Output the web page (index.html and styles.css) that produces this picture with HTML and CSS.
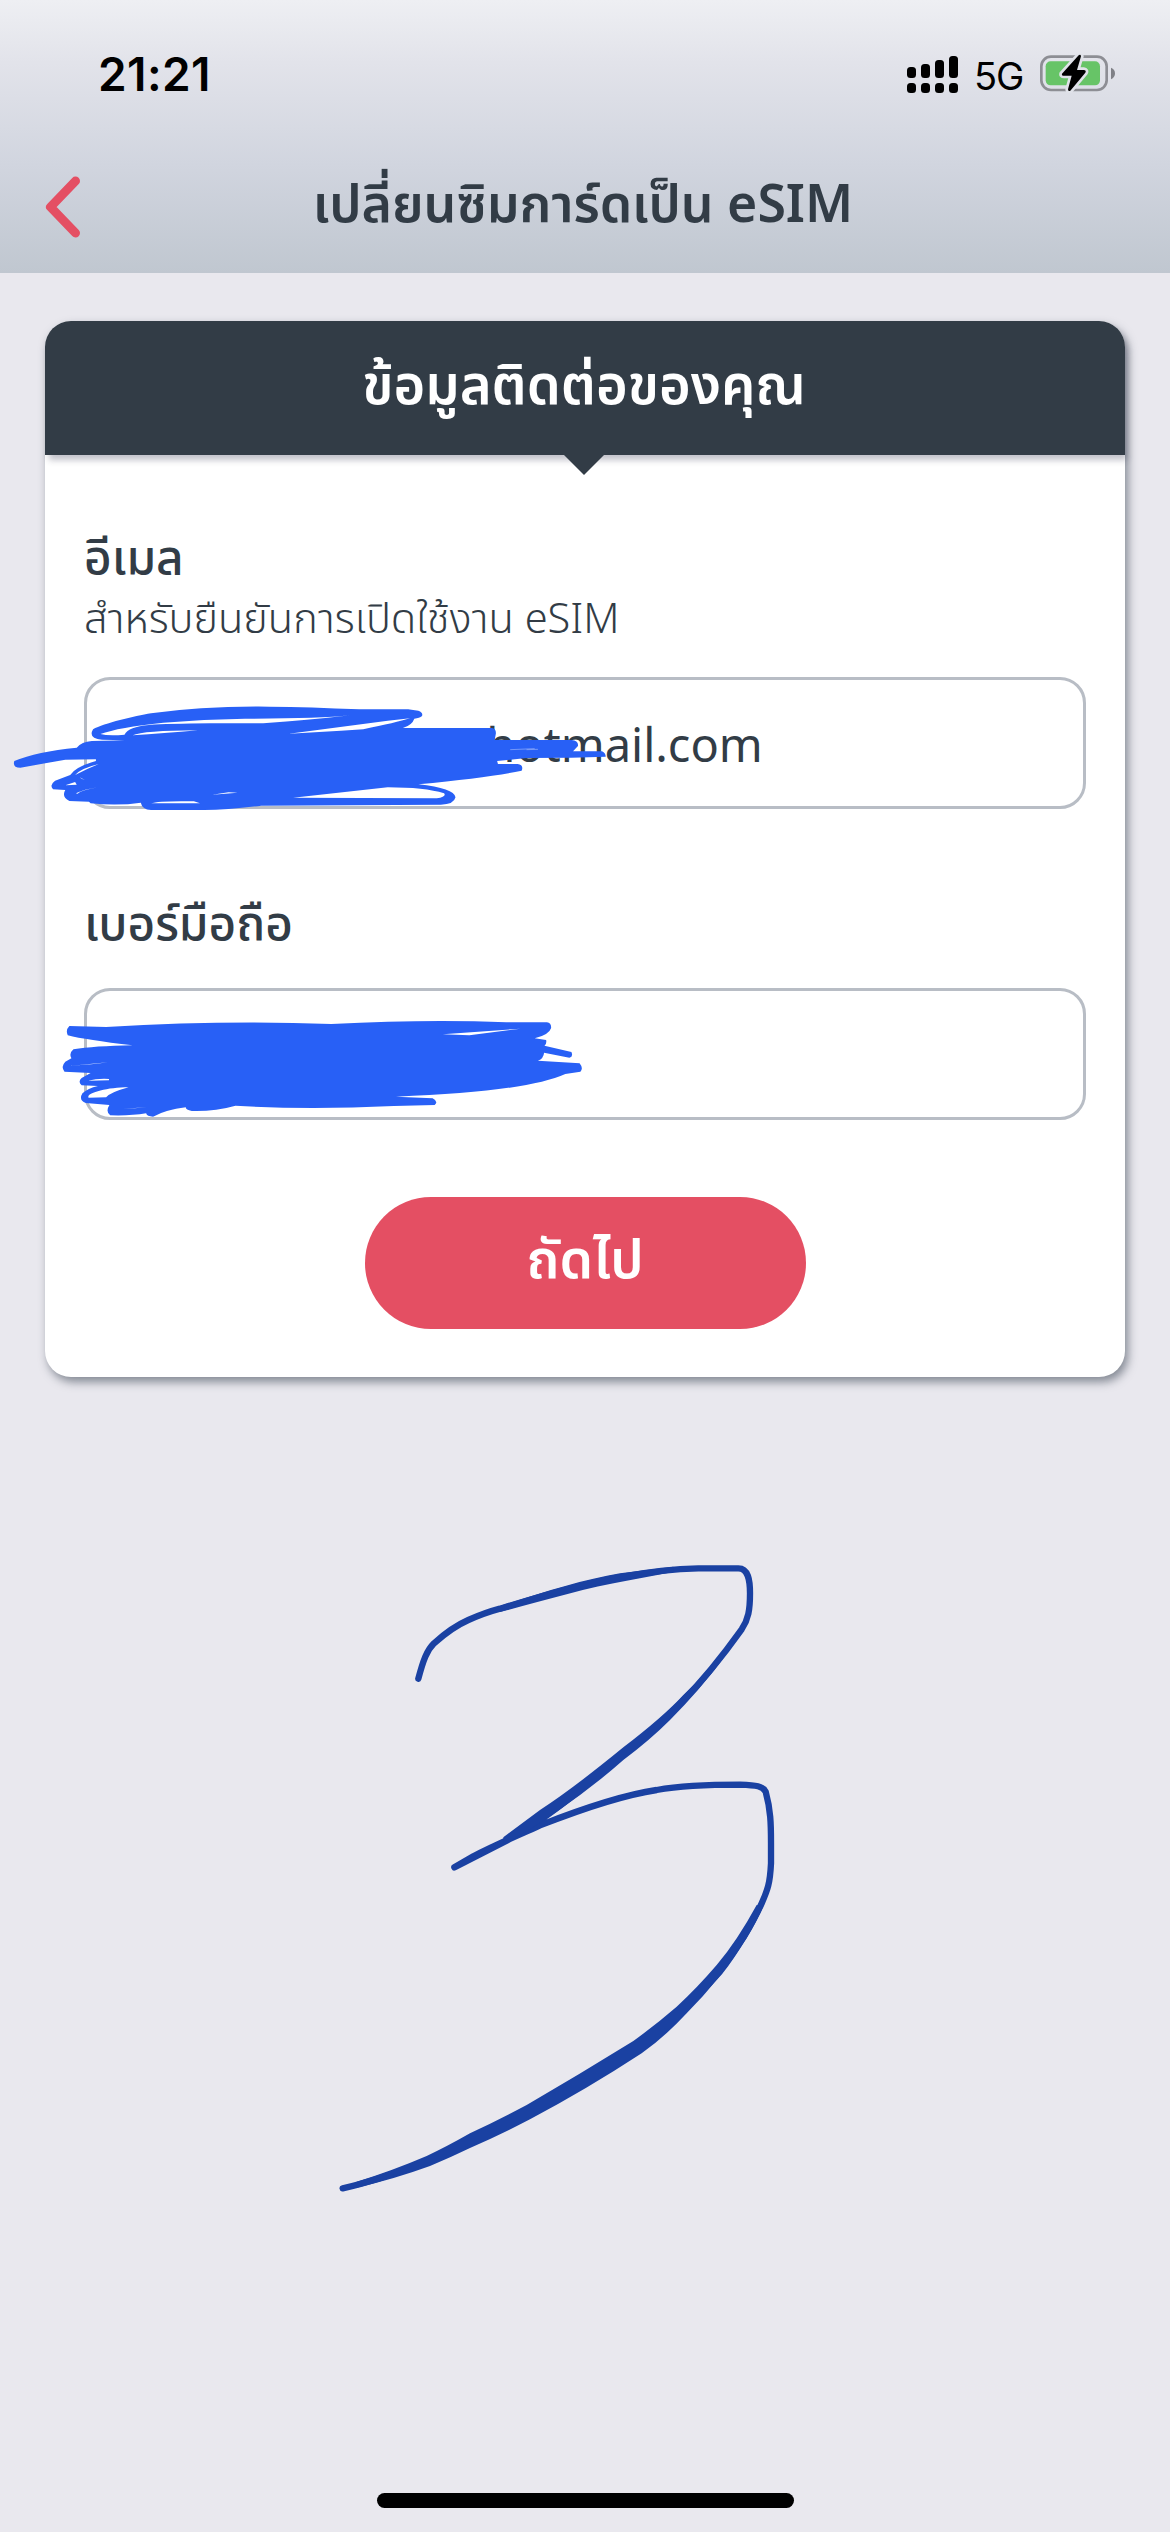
FILE: index.html
```html
<!DOCTYPE html>
<html lang="th">
<head>
<meta charset="utf-8">
<title>เปลี่ยนซิมการ์ดเป็น eSIM</title>
<link rel="stylesheet" href="styles.css">
</head>
<body>
<header class="header">
  <div class="status">
    <span class="time">21:21</span>
    <div class="status-icons">
      <svg class="signal" viewBox="0 0 52 38" width="52" height="38">
        <rect x="0" y="11" width="9" height="11" rx="3.5"/><rect x="14" y="8" width="9" height="14" rx="3.5"/><rect x="28" y="4" width="9" height="18" rx="3.5"/><rect x="42" y="0" width="9" height="22" rx="3.5"/>
        <rect x="0" y="27" width="9" height="10" rx="3.5"/><rect x="14" y="27" width="9" height="10" rx="3.5"/><rect x="28" y="27" width="9" height="10" rx="3.5"/><rect x="42" y="27" width="9" height="10" rx="3.5"/>
      </svg>
      <span class="network">5G</span>
      <svg class="battery" viewBox="480 74 228 116" width="76" height="38.7">
        <rect x="484" y="82" width="196" height="100" rx="29" fill="none" stroke="#8d8e94" stroke-width="8"/>
        <path d="M693 115Q705 120 705 132T693 150Z" fill="#7f8086"/>
        <rect x="497" y="96" width="163" height="72" rx="15" fill="#67c467"/>
        <path d="M596 78L546 133Q544 139 552 139H575L564 180Q564 188 571 184L616 130Q620 123 611 122H591L603 81Q602 74 596 78Z" fill="#000" stroke="#e0e2e9" stroke-width="16" paint-order="stroke"/>
      </svg>
    </div>
  </div>
  <div class="nav">
    <svg class="back" viewBox="0 0 40 66" width="40" height="66"><path d="M32.5 7L7.500 33L32.500 59"/></svg>
    <h1 class="title">เปลี่ยนซิมการ์ดเป็น eSIM</h1>
  </div>
</header>
<main class="main">
  <section class="card">
    <h2 class="card-head">ข้อมูลติดต่อของคุณ</h2>
    <form class="form">
      <label class="label">อีเมล</label>
      <p class="hint">สำหรับยืนยันการเปิดใช้งาน eSIM</p>
      <div class="input"><span class="email">@hotmail.com</span>
        <svg class="scribble scribble-mail" viewBox="0 0 1568 540" preserveAspectRatio="none">
          <path class="fill" d="M228 208C255 190 330 168 370 160Q500 138 660 140Q760 141 880 148H1000Q1012 150 1025 152Q1037 157 1034 168Q1028 175 1015 176Q1010 195 987 204H1205Q1215 205 1215 220L1212 240H1400Q1418 242 1416 258L1404 274H1475Q1484 280 1484 290L1400 293L1290 294L1218 303L1220 312H1268Q1284 315 1278 332Q1200 352 1025 373Q1113 385 1116 412Q1112 434 1080 434L640 437Q560 450 500 450H370Q348 448 345 428Q290 438 222 430L218 425L170 423Q150 410 160 390L130 388Q120 375 135 362L172 345Q185 320 235 303V298L160 299L50 323Q30 323 35 303Q90 275 188 263Q200 245 225 243L306 241L250 239Q215 235 228 208Z"/>
          <path class="gap" d="M246 222Q290 202 400 188Q500 177 600 176Q780 176 858 166Q760 180 645 190H515Q410 191 365 195Q315 200 305 224Q265 228 246 222ZM325 226Q350 212 485 211Q400 220 325 226ZM708 221L950 182L1005 175Q970 188 890 208L835 212ZM184 345Q198 325 242 312Q210 328 184 345ZM186 400Q205 388 240 382Q200 390 190 401ZM195 352L208 360L200 356ZM160 376L184 366L188 374ZM718 413L950 382Q1040 382 1088 400Q1095 410 1070 415ZM370 430Q390 422 475 424L490 430ZM520 404L560 397L582 398Z"/>
          <path class="gap thin" d="M1250 269L1310 266M1290 269L1318 268"/>
        </svg>
      </div>
      <label class="label label-phone">เบอร์มือถือ</label>
      <div class="input">
        <svg class="scribble scribble-phone" viewBox="0 0 1568 780" preserveAspectRatio="none">
          <path class="fill" d="M170 438L260 441Q550 420 812 432Q1050 417 1240 427H1340Q1352 430 1350 445Q1345 465 1310 475L1338 480Q1340 492 1334 497L1400 516Q1405 530 1395 533L1333 518Q1332 535 1318 542L1420 550Q1430 565 1422 575L1385 582Q1290 635 970 650L1060 655Q1075 665 1065 675L965 678Q750 690 577 677Q525 695 470 693Q455 690 455 682Q405 690 375 710Q360 710 358 700Q320 708 270 706Q258 695 268 675L210 669Q192 660 202 640Q215 625 240 618L200 616Q190 605 200 594L222 579L158 575Q148 560 160 545L175 535Q168 520 180 508Q230 498 325 496Q210 480 166 466Q160 450 170 438Z"/>
          <path class="gap" d="M1085 463L1275 446L1150 466ZM170 558L264 547Q230 553 170 558ZM215 602Q240 595 267 597V601ZM217 653C210 640 260 622 315 622Q270 637 260 652ZM302 687L360 681Q330 686 302 687Z"/>
        </svg>
      </div>
      <div class="actions"><button class="next" type="button">ถัดไป</button></div>
    </form>
  </section>
</main>
<svg class="three" viewBox="-60 0 1500 2040">
  <path class="pen" d="M235 446C250 390 260 362 282 340Q335 292 385 270T480 236C600 199 730 160 840 141Q970 117 1075 115H1195C1225 115 1230 150 1230 190C1230 240 1225 268 1205 298C1150 375 1090 450 1025 516Q980 565 850 670C720 785 600 880 500 932L343 1012L400 979C470 943 530 918 600 886C730 835 850 795 950 780C1030 766 1100 764 1200 764C1250 766 1268 768 1277 785C1292 840 1293 880 1293 940V1000C1290 1060 1283 1080 1265 1120C1240 1175 1190 1260 1140 1325C1070 1405 1000 1470 895 1550C820 1605 720 1660 640 1704C560 1750 490 1788 420 1823C350 1857 300 1878 260 1893C180 1925 100 1955 8 1975"/>
  <path class="thick" d="M480 228C600 190 730 148 840 130L1000 110V126L860 152C740 172 600 215 480 246ZM1130 385Q1085 445 1030 495Q970 560 850 652Q700 775 600 840L490 922V945Q570 900 650 845Q760 770 850 690Q930 630 990 570Q1080 480 1150 385ZM1250 1125Q1190 1235 1130 1305Q1070 1375 1010 1430Q945 1486 880 1533Q720 1632 560 1725Q475 1770 390 1810Q320 1850 260 1878Q150 1925 50 1955V1973Q160 1948 270 1908Q330 1883 390 1854Q480 1815 570 1768Q740 1678 905 1570Q975 1520 1040 1450Q1140 1350 1220 1225Q1250 1175 1270 1130Z"/>
</svg>
<div class="home"></div>
</body>
</html>
```
FILE: styles.css
```css
* { box-sizing: border-box; }
body {
  margin: 0;
  width: 1170px;
  height: 2532px;
  position: relative;
  overflow: hidden;
  background: #e9e8ee;
  color: #323c46;
  font-family: "Noto Sans", "Noto Sans Thai", "Open Sans", sans-serif;
}
.header {
  height: 273px;
  background: linear-gradient(#eeeff3 0, #e2e3ea 23%, #d1d5df 60%, #c0c7d0 100%);
}
.status {
  height: 150px;
  display: flex;
  justify-content: space-between;
  padding: 0 54px 0 98px;
  color: #000;
  font-family: Inter, sans-serif;
}
.time { font-size: 46px; font-weight: 600; line-height: 54px; padding-top: 47px; letter-spacing: 0.4px; }
.status-icons { display: flex; align-items: flex-start; padding-top: 56px; }
.network { font-size: 38px; line-height: 40px; margin: 0 17px 0 15px; width: 49px; letter-spacing: -1px; }
.battery { margin-top: -2px; }
.nav { position: relative; height: 123px; }
.back { position: absolute; left: 43px; top: 24px; fill: none; stroke: #e44f63; stroke-width: 9; stroke-linecap: round; stroke-linejoin: round; }
.title { margin: 0; text-align: center; font-size: 51.8px; font-weight: 600; line-height: 70px; padding: 17px 4px 0 0; }
.main { padding: 48px 45px 0; }
.card {
  height: 1056px;
  background: #fff;
  border-radius: 26px;
  box-shadow: 3px 5px 10px rgba(50, 60, 75, .55);
}
.card-head {
  position: relative;
  margin: 0;
  height: 134px;
  background: #323c46;
  color: #fff;
  border-radius: 26px 26px 0 0;
  font-size: 54.3px;
  font-weight: 600;
  line-height: 125px;
  padding-right: 2px;
  text-align: center;
  box-shadow: 3px 6px 6px -1px rgba(50, 50, 75, .3);
}
.card-head::after {
  content: "";
  position: absolute;
  left: 518px;
  top: 133px;
  border: 21px solid transparent;
  border-top-color: #323c46;
  border-bottom: 0;
}
.form { padding: 66px 39px 0; }
.label { display: block; height: 70px; line-height: 70px; font-size: 47.7px; font-weight: 500; }
.hint { margin: 0; height: 62px; font-size: 41.6px; font-weight: 350; line-height: 53px; }
.input {
  position: relative;
  height: 132px;
  width: 1002px;
  margin-top: 24px;
  border: 3px solid #b8bdc5;
  border-radius: 26px;
}
.email { display: block; padding-left: 357px; font-size: 47px; line-height: 128px; }
.label-phone { margin-top: 78px; }
.label-phone + .input { margin-top: 31px; }
.scribble { position: absolute; left: -87px; width: 640px; }
.scribble .fill { fill: #2860f6; }
.scribble .gap { fill: #fff; }
.scribble .thin { fill: none; stroke: #8fabf9; stroke-width: 2; }
.scribble-mail { top: -20px; height: 180px; }
.scribble-phone { top: -111px; height: 260px; }
.actions { display: flex; justify-content: center; padding: 77px 0 0; }
.next {
  width: 441px;
  height: 132px;
  border: 0;
  padding: 0 0 10px;
  border-radius: 66px;
  background: #e44f63;
  color: #fff;
  font: 600 53.5px/120px "Noto Sans", "Noto Sans Thai", sans-serif;
}
.three { position: absolute; left: 320px; top: 1530px; width: 500px; height: 680px; fill: none; }
.pen { stroke: #1a41a2; stroke-width: 19; stroke-linecap: round; stroke-linejoin: round; }
.thick { fill: #1a41a2; }
.home { position: absolute; left: 377px; top: 2493px; width: 417px; height: 15px; border-radius: 8px; background: #000; }
```
